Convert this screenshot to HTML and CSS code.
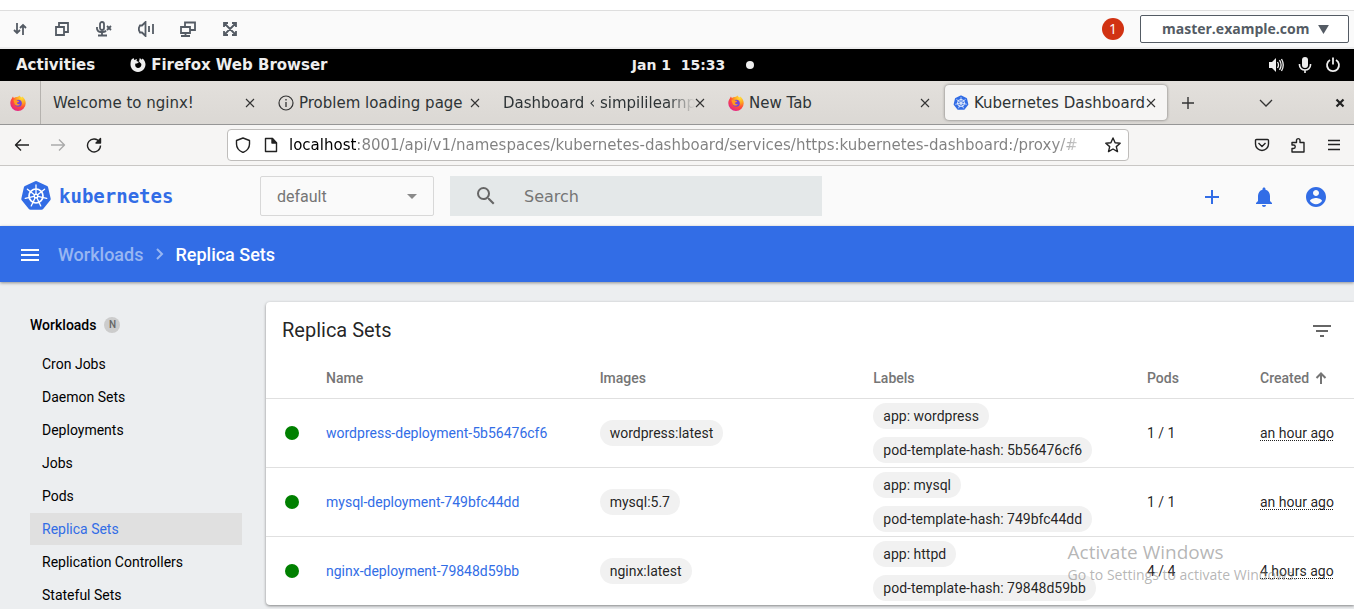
FILE: index.html
```html
<!DOCTYPE html>
<html lang="en">
<head>
<meta charset="utf-8">
<title>Kubernetes Dashboard</title>
<meta name="viewport" content="width=device-width, initial-scale=1">
<link rel="stylesheet" href="styles.css">
</head>
<body>
<svg class="defs" aria-hidden="true">
  <defs>
    <radialGradient id="fox" cx="0.75" cy="0.15" r="0.95">
      <stop offset="0" stop-color="#ffe03a"/><stop offset="0.35" stop-color="#ffa41f"/><stop offset="0.65" stop-color="#ff4b3a"/><stop offset="1" stop-color="#e0208f"/>
    </radialGradient>
    <symbol id="firefox" viewBox="0 0 16 16">
      <path fill="url(#fox)" d="M2 3.2C2.2 2.400 2.600 1.800 3 1.500c.2.700.5 1.100.9 1.500C4.900 2.200 6 1.900 7 2c1.100-.1 1.800-1 2.600-1.500.2 1 1.200 1.400 2.200 2.100l.4-1c1.900 1.300 3.500 3.600 3.500 6.600A7.700 7.700 0 0 1 .3 8.200C.3 6.200 1 4.500 2 3.200z"/>
      <circle cx="8.300" cy="8.200" r="3.500" fill="#7542d9"/>
      <path fill="#ff9a1f" d="M3.500 5.200C5 4.200 6.500 4.800 7.500 5.800c1 0 1.500.2 1.500.6-.4.700-1.500.9-2 1.200-.3 1.500 1.800 2.200 3 1.300-1 2.500-5 2.200-5.700-.9z"/>
    </symbol>
    <symbol id="k8s" viewBox="-16 -16 32 32">
      <path fill="#326ce5" stroke="#326ce5" stroke-width="4" stroke-linejoin="round" d="M0-13 10.200-8.100 12.700 2.900 5.600 11.700H-5.600L-12.700 2.900-10.200-8.100z"/>
      <g fill="none" stroke="#fff">
        <circle r="7" stroke-width="1.700"/>
        <g stroke-width="1.300" stroke-linecap="round">
          <path d="M0-2v-9"/><path d="M0-2v-9" transform="rotate(51.430)"/><path d="M0-2v-9" transform="rotate(102.860)"/><path d="M0-2v-9" transform="rotate(154.290)"/><path d="M0-2v-9" transform="rotate(205.710)"/><path d="M0-2v-9" transform="rotate(257.140)"/><path d="M0-2v-9" transform="rotate(308.570)"/>
        </g>
        <circle r="1.800" stroke-width="1.400"/>
      </g>
    </symbol>
    <symbol id="cross" viewBox="0 0 16 16"><path d="M4 4l8 8M12 4l-8 8" fill="none" stroke="#333" stroke-width="1.100"/></symbol>
  </defs>
</svg>

<div class="app">
  <div class="strip"></div>
  <div class="remote">
    <div class="remote-tools">
      <button aria-label="Transfer"><svg viewBox="0 0 16 16"><path d="M5 2v10M2 9l3 3 3-3M11 14V4M8 7l3-3 3 3"/></svg></button>
      <button aria-label="Windows"><svg viewBox="0 0 16 16"><path d="M2 6h8v8H2zM5 6V2h9v9h-4"/></svg></button>
      <button aria-label="Microphone off"><svg viewBox="0 0 16 16"><path d="M4 3a2 2 0 0 1 4 0v4a2 2 0 0 1-4 0zM1 6v2a4 4 0 0 0 4 3h2c1.500 0 2.500-.5 3-1.500M6 11v4M2 14.500h9M11 5l4 4M15 5l-4 4"/></svg></button>
      <button aria-label="Sound"><svg viewBox="0 0 16 16"><path d="M7.500 1v14L4 11.500H2L.9 9V7L2 4.500h2zM11 5v6M15 3v10"/></svg></button>
      <button aria-label="Displays"><svg viewBox="0 0 16 16"><path d="M1 6h9v6H1zM5 6V1.500h10V9h-5M5.500 12v2.500M1 15h9"/></svg></button>
      <button aria-label="Full screen"><svg viewBox="0 0 16 16"><path d="M2 6V2h4M10 2h4v4M14 10v4h-4M6 14H2v-4M2 2l12 12M14 2 2 14"/></svg></button>
    </div>
    <span class="alert">1</span>
    <div class="host">
      <select aria-label="Host"><option>master.example.com</option></select>
      <svg viewBox="0 0 12 10"><path d="M0 0h12L6 10z"/></svg>
    </div>
  </div>

  <div class="gnome">
    <div class="gnome-left">
      <span>Activities</span>
      <span class="gnome-app"><svg viewBox="0 0 16 16"><path fill="#eee" d="M1.500 2.500 3.500 1l.8 2L7 2 6.500 4 9 5 7 6.500 5.500 6.500C4.500 9 6 11 8 11c2.500 0 3.800-2 3.200-4.200L9 4.500 9.800 1l2 1.800.7-1.300A7.500 7.500 0 1 1 .5 8C.5 6 .7 4 1.500 2.500z"/></svg>Firefox Web Browser</span>
    </div>
    <div class="gnome-clock"><span>Jan 1&nbsp; 15:33</span><i></i></div>
    <div class="gnome-status">
      <svg viewBox="0 0 16 16"><path fill="#eee" d="M0 5h3l4-4v14l-4-4H0z"/><path d="M8.500 5q2 3 0 6M10.500 3.200q3.200 4.800 0 9.600M12.500 2q3.500 6 0 12" fill="none" stroke="#eee" stroke-width="1.300"/></svg>
      <svg viewBox="0 0 16 16"><rect x="5" y="0" width="6" height="11" rx="3" fill="#eee"/><path d="M2.500 7v1a5.500 5 0 0 0 11 0V7M8 13v3" fill="none" stroke="#eee" stroke-width="1.600"/></svg>
      <svg viewBox="0 0 16 16"><path d="M5 3a6 6 0 1 0 6 0M8 0.500v7" fill="none" stroke="#eee" stroke-width="1.800"/></svg>
    </div>
  </div>

  <div class="tabs">
    <div class="pinned"><svg><use href="#firefox"/></svg></div>
    <div class="tab"><span class="tab-title">Welcome to nginx!</span><button aria-label="Close tab"><svg><use href="#cross"/></svg></button></div>
    <div class="tab"><svg viewBox="0 0 16 16"><circle cx="8" cy="8" r="7" fill="none" stroke="#333" stroke-width="1.200"/><path d="M8 7v5M8 4v1.500" stroke="#333" stroke-width="1.300"/></svg><span class="tab-title">Problem loading page</span><button aria-label="Close tab"><svg><use href="#cross"/></svg></button></div>
    <div class="tab"><span class="tab-title fade">Dashboard ‹ simpililearnp</span><button aria-label="Close tab"><svg><use href="#cross"/></svg></button></div>
    <div class="tab"><svg><use href="#firefox"/></svg><span class="tab-title">New Tab</span><button aria-label="Close tab"><svg><use href="#cross"/></svg></button></div>
    <div class="tab active"><svg><use href="#k8s"/></svg><span class="tab-title">Kubernetes Dashboard</span><button aria-label="Close tab"><svg><use href="#cross"/></svg></button></div>
    <button class="tab-new" aria-label="New tab"><svg viewBox="0 0 16 16"><path d="M8 2v12M2 8h12" stroke="#333" stroke-width="1.400"/></svg></button>
    <div class="tabs-end">
      <button aria-label="List tabs"><svg viewBox="0 0 16 16"><path d="M2 5l6 6 6-6" fill="none" stroke="#333" stroke-width="1.300"/></svg></button>
      <button aria-label="Close window"><svg viewBox="0 0 16 16"><path d="M4.500 4.500l7 7M11.500 4.500l-7 7" stroke="#222" stroke-width="2.200"/></svg></button>
    </div>
  </div>

  <div class="nav">
    <button aria-label="Back"><svg viewBox="0 0 16 16"><path d="M15 8H1.500M7 2.500 1.500 8 7 13.500"/></svg></button>
    <button class="off" aria-label="Forward"><svg viewBox="0 0 16 16"><path d="M1 8h13.500M9 2.500 14.500 8 9 13.500"/></svg></button>
    <button aria-label="Reload"><svg viewBox="0 0 16 16"><path d="M13.500 5A6.500 6.500 0 1 0 14.500 8.500"/><path d="M14.500 1.500v4.500H10z" class="solid"/></svg></button>
    <div class="url">
      <svg viewBox="0 0 16 16"><path d="M8 1 14.500 3.500V7c0 4-3 7-6.500 8.500C4.500 14 1.500 11 1.500 7V3.500z"/></svg>
      <svg viewBox="0 0 16 16"><path d="M2.500 1.500h7L13.500 6v8.500h-11z"/><path class="solid" d="M9 1.500V6h4.500z"/></svg>
      <div class="url-text"><input aria-label="Address" value="localhost:8001/api/v1/namespaces/kubernetes-dashboard/services/https:kubernetes-dashboard:/proxy/#"></div>
      <button aria-label="Bookmark"><svg viewBox="0 0 16 16"><path d="M8 1l2.100 4.700 5.100.5-3.900 3.400 1.200 5L8 12l-4.500 2.600 1.200-5L.8 6.200l5.100-.5z"/></svg></button>
    </div>
    <button aria-label="Pocket"><svg viewBox="0 0 16 16"><path d="M2.500 2.500h11q1 0 1 1V7a6.500 6.500 0 0 1-13 0V3.500q0-1 1-1zM4.500 6 8 9.500 11.500 6"/></svg></button>
    <button aria-label="Extensions"><svg viewBox="0 0 16 16"><path d="M2 5.500h4.500V3a1.800 1.800 0 0 1 3.500 0v2.500h4v9.500H2v-3.500h1.500a1.700 1.700 0 0 0 0-3.500H2z"/></svg></button>
    <button aria-label="Menu"><svg viewBox="0 0 16 16"><path d="M2 3.500h12M2 7.500h12M2 12.500h12"/></svg></button>
  </div>

  <header class="top">
    <a class="brand" href="#"><svg><use href="#k8s"/></svg><span>kubernetes</span></a>
    <div class="ns">
      <select aria-label="Namespace"><option>default</option></select>
      <svg viewBox="0 0 10 5"><path d="M0 0h10L5 5z"/></svg>
    </div>
    <div class="search">
      <svg viewBox="0 0 24 24"><path d="M15.500 14h-.79l-.28-.27A6.471 6.471 0 0 0 16 9.500 6.500 6.500 0 1 0 9.500 16c1.610 0 3.090-.59 4.230-1.570l.27.28v.79l5 4.990L20.490 19l-4.990-5zm-6 0C7.010 14 5 11.990 5 9.500S7.010 5 9.500 5 14 7.010 14 9.500 11.990 14 9.500 14z"/></svg>
      <input type="text" aria-label="Search" placeholder="Search">
    </div>
    <div class="top-actions">
      <button aria-label="Create"><svg viewBox="0 0 24 24"><path d="M19 13h-6v6h-2v-6H5v-2h6V5h2v6h6v2z"/></svg></button>
      <button aria-label="Notifications"><svg viewBox="0 0 24 24"><path d="M12 22c1.100 0 2-.9 2-2h-4c0 1.100.89 2 2 2zm6-6v-5c0-3.070-1.640-5.640-4.500-6.320V4c0-.83-.67-1.500-1.500-1.500s-1.500.67-1.500 1.500v.68C7.630 5.360 6 7.920 6 11v5l-2 2v1h16v-1l-2-2z"/></svg></button>
      <button aria-label="Account"><svg viewBox="0 0 24 24"><path d="M12 2C6.480 2 2 6.480 2 12s4.480 10 10 10 10-4.480 10-10S17.520 2 12 2zm0 3c1.660 0 3 1.340 3 3s-1.340 3-3 3-3-1.340-3-3 1.340-3 3-3zm0 14.200c-2.500 0-4.710-1.280-6-3.220.03-1.990 4-3.080 6-3.080 1.990 0 5.970 1.090 6 3.080-1.290 1.940-3.500 3.220-6 3.220z"/></svg></button>
    </div>
  </header>

  <div class="crumbs">
    <button aria-label="Toggle navigation"><svg viewBox="0 0 24 24"><path d="M3 19h18v-2H3v2zm0-5h18v-2H3v2zm0-7v2h18V7H3z"/></svg></button>
    <a href="#">Workloads</a>
    <svg viewBox="0 0 8 12"><path d="M1 1l5 5-5 5"/></svg>
    <span>Replica Sets</span>
  </div>

  <div class="content">
    <nav class="side">
      <a class="side-head" href="#">Workloads <span>N</span></a>
      <a href="#">Cron Jobs</a>
      <a href="#">Daemon Sets</a>
      <a href="#">Deployments</a>
      <a href="#">Jobs</a>
      <a href="#">Pods</a>
      <a href="#" class="current">Replica Sets</a>
      <a href="#">Replication Controllers</a>
      <a href="#">Stateful Sets</a>
    </nav>
    <main class="card">
      <div class="card-head">
        <h1>Replica Sets</h1>
        <button aria-label="Filter"><svg viewBox="0 0 24 24"><path d="M10 19h4v-2h-4v2zM3 7v2h18V7H3zm3 7h12v-2H6v2z"/></svg></button>
      </div>
      <table>
        <colgroup><col class="c-status"><col><col><col><col class="c-pods"><col class="c-created"></colgroup>
        <thead>
          <tr><th></th><th>Name</th><th>Images</th><th>Labels</th><th>Pods</th><th>Created <svg viewBox="0 0 12 12"><path d="M6 12V1.500M1.500 6 6 1.500 10.500 6"/></svg></th></tr>
        </thead>
        <tbody>
          <tr>
            <td><i class="dot"></i></td>
            <td><a href="#">wordpress-deployment-5b56476cf6</a></td>
            <td><span class="chip">wordpress:latest</span></td>
            <td><div class="chips"><span class="chip">app: wordpress</span><span class="chip">pod-template-hash: 5b56476cf6</span></div></td>
            <td>1 / 1</td>
            <td><span class="age">an hour ago</span></td>
          </tr>
          <tr>
            <td><i class="dot"></i></td>
            <td><a href="#">mysql-deployment-749bfc44dd</a></td>
            <td><span class="chip">mysql:5.7</span></td>
            <td><div class="chips"><span class="chip">app: mysql</span><span class="chip">pod-template-hash: 749bfc44dd</span></div></td>
            <td>1 / 1</td>
            <td><span class="age">an hour ago</span></td>
          </tr>
          <tr>
            <td><i class="dot"></i></td>
            <td><a href="#">nginx-deployment-79848d59bb</a></td>
            <td><span class="chip">nginx:latest</span></td>
            <td><div class="chips"><span class="chip">app: httpd</span><span class="chip">pod-template-hash: 79848d59bb</span></div></td>
            <td>4 / 4</td>
            <td><span class="age">4 hours ago</span></td>
          </tr>
        </tbody>
      </table>
    </main>
  </div>
</div>
<div class="watermark"><strong>Activate Windows</strong><span>Go to Settings to activate Windows.</span></div>
</body>
</html>
```
FILE: styles.css
```css
* { box-sizing: border-box; }
body { margin: 0; font-family: Roboto, "Liberation Sans", sans-serif; font-size: 14px; color: rgba(0, 0, 0, 0.87); }
button { padding: 0; border: 0; background: none; font: inherit; color: inherit; display: flex; align-items: center; justify-content: center; flex: none; }
a { text-decoration: none; color: #326de6; }
svg { display: block; flex: none; width: 16px; height: 16px; }
select { appearance: none; font: inherit; color: inherit; background: none; border: 0; width: 100%; height: 100%; margin: 0; }
.defs { position: absolute; width: 0; height: 0; }
.app { height: 100vh; display: flex; flex-direction: column; overflow: hidden; background: #eceef0; }
.app > * { flex: none; }
.strip { height: 10px; background: #fff; }

/* Remote console toolbar */
.remote { height: 39px; display: flex; align-items: center; background: #fafafa; border-top: 1px solid #dedede; border-bottom: 2px solid #ededee; padding: 0 5px 0 12px; }
.remote-tools { display: flex; gap: 26px; flex: 1; }
.remote-tools path { fill: none; stroke: #545b64; stroke-width: 1.8; }
.alert { width: 22px; height: 22px; border-radius: 50%; background: #d13212; color: #fff; font: 14px/22px "Open Sans", sans-serif; text-align: center; margin-right: 16px; }
.host { display: flex; align-items: center; width: 209px; height: 28px; border: 1px solid #545b64; border-radius: 2px; background: #fff; color: #545b64; padding: 0 19px 0 21px; font: bold 14px "Open Sans", sans-serif; }
.host select { padding: 0 0 2px; }
.host svg { width: 11px; height: 9px; fill: #545b64; }

/* Desktop top bar */
.gnome { height: 32px; background: #000; color: #eee; display: grid; grid-template-columns: 1fr auto 1fr; align-items: center; padding: 0 13px 0 16px; font: bold 14px "DejaVu Sans", sans-serif; }
.gnome-left, .gnome-app, .gnome-clock, .gnome-status { display: flex; align-items: center; }
.gnome-left { gap: 35px; font-size: 15px; }
.gnome-app { gap: 5px; }
.gnome-clock { gap: 21px; padding-left: 29px; }
.gnome-clock i { width: 8px; height: 8px; border-radius: 50%; background: #eee; }
.gnome-status { gap: 12px; justify-content: flex-end; }

/* Browser tabs */
.tabs { height: 44px; display: flex; background: linear-gradient(#e3e0dc, #dbd8d4); border-bottom: 1px solid #969696; font: 15px "DejaVu Sans", sans-serif; color: #2e3436; }
.pinned { width: 41px; display: flex; align-items: center; justify-content: center; border-right: 1px solid #b5b2ae; padding-right: 4px; }
.tab { flex: 0 1 225px; min-width: 0; display: flex; align-items: center; gap: 5px; padding: 0 8px 0 12px; }
.tab-title { flex: 1; min-width: 0; overflow: hidden; white-space: nowrap; margin-right: -8px; }
.fade { mask-image: linear-gradient(to left, transparent, #000 28px); }
.tab.active { flex-basis: 222px; background: #f6f5f4; border-radius: 4px; box-shadow: 0 0 3px rgba(0, 0, 0, 0.5); margin: 4px 0 4px 4px; padding: 0 8px; }
.tab-new { width: 42px; }
.tabs-end { display: flex; gap: 58px; margin-left: auto; padding-right: 6px; }

/* Browser navigation */
.nav { height: 41px; display: flex; align-items: center; background: #f6f5f4; border-bottom: 1px solid #c9c7c5; padding: 0 2px 0 4px; }
.nav > button { width: 36px; height: 32px; }
.nav path { fill: none; stroke: #222; stroke-width: 1.4; stroke-linejoin: round; }
.nav path.solid { fill: #222; }
.nav .off path { stroke: #aaa; }
.url { flex: 1; min-width: 0; height: 32px; display: flex; align-items: center; gap: 12px; margin: 0 115px; padding: 0 7px; background: #fff; border: 1px solid #bfbdbb; border-radius: 4px; }
.url-text { flex: 1; min-width: 0; display: flex; margin: 0 0 0 -2px; mask-image: linear-gradient(to left, transparent, #000 40px); }
.url-text input { flex: 1; min-width: 0; border: 0; padding: 0; font: 15px "DejaVu Sans", sans-serif; color: transparent; background: linear-gradient(to right, #000 69px, #808080 69px); background-clip: text; -webkit-background-clip: text; }

/* Dashboard header */
.top { height: 60px; display: flex; align-items: center; background: #fafafa; padding: 0 26px 0 20px; }
.brand { display: flex; align-items: center; gap: 7px; width: 240px; color: #326de6; font: bold 19px "DejaVu Sans Mono", monospace; }
.brand svg { width: 32px; height: 32px; }
.ns { width: 174px; height: 40px; display: flex; align-items: center; border: 1px solid #d8d8d8; border-radius: 2px; padding: 0 16px; font-size: 16px; color: #757575; }
.ns select { padding: 0; }
.ns svg { width: 10px; height: 5px; fill: #8a8a8a; }
.search { width: 372px; height: 40px; margin-left: 16px; display: flex; align-items: center; gap: 26px; padding: 0 24px; background: #e4e8e9; }
.search svg { width: 24px; height: 24px; fill: #666; }
.search input { flex: 1; min-width: 0; border: 0; padding: 0; background: none; font: 16px "DejaVu Sans", sans-serif; }
.search input::placeholder { color: #757575; opacity: 1; }
.top-actions { display: flex; gap: 28px; margin-left: auto; padding-top: 2px; }
.top-actions svg { width: 24px; height: 24px; fill: #326de6; }

/* Breadcrumb bar */
.crumbs { height: 56px; display: flex; align-items: center; background: #326de6; color: #fff; padding: 0 18px; font-size: 18px; font-weight: 500; box-shadow: 0 1px 3px rgba(0, 0, 0, 0.4); z-index: 1; }
.crumbs button { margin-right: 16px; }
.crumbs button svg { width: 24px; height: 24px; fill: #fff; }
.crumbs a { color: #98b6f2; }
.crumbs > svg { width: 8px; height: 12px; margin: 0 11px 0 13px; }
.crumbs > svg path { fill: none; stroke: #98b6f2; stroke-width: 2; }

/* Content */
.app > .content { flex: 1; min-height: 0; display: flex; align-items: flex-start; }
.side { flex: none; width: 266px; padding: 30px 24px 0 30px; display: flex; flex-direction: column; gap: 1px; }
.side a { color: #000; line-height: 32px; padding: 0 12px; }
.side .side-head { padding: 0; line-height: 26px; font-weight: 500; margin-bottom: 9px; display: flex; align-items: center; gap: 8px; }
.side-head span { width: 16px; height: 16px; border-radius: 50%; background: #ccc; color: #666; font-size: 10px; line-height: 16px; text-align: center; }
.side .current { background: #e0e0e0; color: #326de6; }
.card { flex: 1; min-width: 0; margin-top: 20px; background: #fff; border-radius: 4px 0 0 4px; box-shadow: 0 1px 3px rgba(0, 0, 0, 0.45); }
.card-head { height: 56px; display: flex; align-items: center; justify-content: space-between; padding: 0 20px 0 16px; }
.card-head h1 { margin: 0; font-size: 20px; font-weight: 400; }
.card-head svg { width: 24px; height: 24px; fill: #666; }
table { width: 100%; table-layout: fixed; border-collapse: separate; border-spacing: 0; }
.c-status { width: 60px; }
.c-pods { width: 113px; }
.c-created { width: 94px; }
th { height: 40px; padding: 0; text-align: left; font-weight: 500; color: #757575; white-space: nowrap; }
th svg { display: inline-block; width: 12px; height: 12px; margin-left: 2px; vertical-align: -1px; }
th path { fill: none; stroke: #757575; stroke-width: 2; }
td { padding: 4px 0; border-top: 1px solid #e0e0e0; white-space: nowrap; }
.dot { display: block; width: 14px; height: 14px; border-radius: 50%; background: #008000; margin-left: 19px; }
.chips { display: flex; flex-direction: column; align-items: flex-start; gap: 8px; }
.chip { display: inline-block; background: #f1f1f1; border-radius: 13px; padding: 0 10px; line-height: 26px; }
.age { text-decoration: underline dotted 1px; text-underline-offset: 2px; text-decoration-skip-ink: none; }

/* System notice over the desktop */
.watermark { position: absolute; right: 57px; bottom: 24px; z-index: 2; display: flex; flex-direction: column; color: rgba(120, 120, 120, 0.55); font-family: "Open Sans", sans-serif; font-size: 14px; line-height: 20px; pointer-events: none; }
.watermark strong { font-weight: 400; font-size: 19px; line-height: 26px; }
```
